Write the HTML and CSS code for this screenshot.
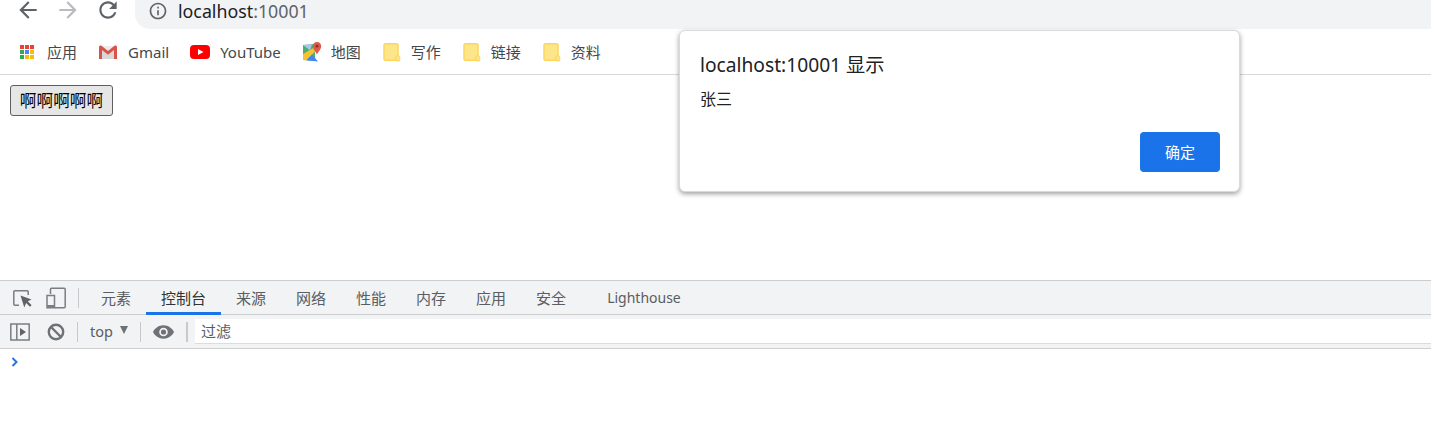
FILE: index.html
```html
<!DOCTYPE html>
<html lang="zh-CN">
<head>
<meta charset="utf-8">
<title>localhost:10001</title>
<link rel="stylesheet" href="styles.css">
</head>
<body>
<div class="window">
  <header class="toolbar">
    <svg class="nav-icon" viewBox="0 0 24 24"><path fill="#5f6368" d="M20 11H7.830l5.590-5.590L12 4l-8 8 8 8 1.410-1.410L7.830 13H20v-2z"/></svg>
    <svg class="nav-icon" viewBox="0 0 24 24"><path fill="#b9bbbe" d="M4 11h12.170l-5.590-5.590L12 4l8 8-8 8-1.410-1.410L16.170 13H4v-2z"/></svg>
    <svg class="nav-icon" viewBox="0 0 24 24"><path fill="#5f6368" d="M17.650 6.350C16.200 4.900 14.210 4 12 4c-4.420 0-7.990 3.580-7.990 8s3.570 8 7.990 8c3.730 0 6.840-2.550 7.730-6h-2.080c-.82 2.330-3.040 4-5.650 4-3.310 0-6-2.690-6-6s2.690-6 6-6c1.660 0 3.140.69 4.220 1.780L13 11h7V4l-2.350 2.350z"/></svg>
    <div class="address">
      <svg class="info-icon" viewBox="0 0 24 24"><path fill="#5f6368" d="M11 7h2v2h-2zm0 4h2v6h-2zm1-9C6.480 2 2 6.480 2 12s4.480 10 10 10 10-4.480 10-10S17.520 2 12 2zm0 18c-4.410 0-8-3.590-8-8s3.590-8 8-8 8 3.590 8 8-3.590 8-8 8z"/></svg>
      <span class="url">localhost<span class="url-port">:10001</span></span>
    </div>
  </header>

  <nav class="bookmarks">
    <a class="bookmark">
      <svg class="bm-icon" viewBox="0 0 20 20">
        <rect x="3" y="3" width="4" height="4" fill="#ea4335"/><rect x="8" y="3" width="4" height="4" fill="#ea4335"/><rect x="13" y="3" width="4" height="4" fill="#ea4335"/>
        <rect x="3" y="8" width="4" height="4" fill="#34a853"/><rect x="8" y="8" width="4" height="4" fill="#4285f4"/><rect x="13" y="8" width="4" height="4" fill="#fbbc05"/>
        <rect x="3" y="13" width="4" height="4" fill="#34a853"/><rect x="8" y="13" width="4" height="4" fill="#fbbc05"/><rect x="13" y="13" width="4" height="4" fill="#fbbc05"/>
      </svg>
      应用
    </a>
    <a class="bookmark">
      <svg class="bm-icon" viewBox="0 0 20 20">
        <path fill="#ececec" d="M1 4h18v13H1z"/>
        <path fill="#d8d8d8" d="M4 17V8l6 4.500L16 8v9z"/>
        <path fill="#d9534a" d="M1 5.200C1 3.600 2.700 3.100 3.800 4L10 9l6.200-5c1.100-.9 2.800-.4 2.800 1.200V17h-3V8l-6 4.700L4 8v9H1z"/>
      </svg>
      Gmail
    </a>
    <a class="bookmark">
      <svg class="bm-icon" viewBox="0 0 20 20">
        <rect y="3" width="20" height="14" rx="4" fill="#f00"/>
        <path fill="#fff" d="M8 7l5.500 3L8 13z"/>
      </svg>
      YouTube
    </a>
    <a class="bookmark bookmark-maps">
      <svg class="bm-icon" viewBox="0 0 20 20">
        <path fill="#4caf70" d="M1 3l12-1v17L1 18z"/>
        <path fill="#fbc02d" d="M1 12l12-7v4.500L4.500 18.300 1 18z"/>
        <path fill="#4285f4" d="M4.500 18.300L10 12.500l6 7z"/>
        <path fill="#a8c7f0" d="M8 8.200L1 3l9-.8z"/>
        <path fill="#dd5a4c" d="M15 0c-2.500 0-4.200 2-4.200 4.200 0 3 4.200 7 4.200 8.800 0-1.800 4.200-5.800 4.200-8.800C19.200 2 17.500 0 15 0z"/>
        <circle cx="15" cy="4.200" r="1.400" fill="#8e2f25"/>
      </svg>
      地图
    </a>
    <a class="bookmark bookmark-folder">
      <svg class="folder-icon" viewBox="0 0 18 20">
        <path fill="#fde68a" stroke="#fbd75b" stroke-width="1.500" d="M2.500 1.800h11a1.500 1.500 0 0 1 1.500 1.500v12.500h-2v2.400H2.500a1.500 1.500 0 0 1-1.500-1.500V3.300a1.500 1.500 0 0 1 1.500-1.500z"/>
        <rect x="12.800" y="14" width="4" height="5" rx="1" fill="#fde68a" stroke="#fbd75b"/>
      </svg>
      写作
    </a>
    <a class="bookmark bookmark-folder">
      <svg class="folder-icon" viewBox="0 0 18 20">
        <path fill="#fde68a" stroke="#fbd75b" stroke-width="1.500" d="M2.500 1.800h11a1.500 1.500 0 0 1 1.500 1.500v12.500h-2v2.400H2.500a1.500 1.500 0 0 1-1.500-1.500V3.300a1.500 1.500 0 0 1 1.500-1.500z"/>
        <rect x="12.800" y="14" width="4" height="5" rx="1" fill="#fde68a" stroke="#fbd75b"/>
      </svg>
      链接
    </a>
    <a class="bookmark bookmark-folder">
      <svg class="folder-icon" viewBox="0 0 18 20">
        <path fill="#fde68a" stroke="#fbd75b" stroke-width="1.500" d="M2.500 1.800h11a1.500 1.500 0 0 1 1.500 1.500v12.500h-2v2.400H2.500a1.500 1.500 0 0 1-1.500-1.500V3.300a1.500 1.500 0 0 1 1.500-1.500z"/>
        <rect x="12.800" y="14" width="4" height="5" rx="1" fill="#fde68a" stroke="#fbd75b"/>
      </svg>
      资料
    </a>
  </nav>

  <main class="page">
    <button class="page-button">啊啊啊啊啊</button>
  </main>

  <section class="devtools">
    <div class="dt-tabs">
      <div class="dt-tools">
        <svg class="dt-icon" viewBox="0 0 20 20"><path fill="none" stroke="#7a7e82" stroke-width="1.500" d="M7 17.200H2.800a1 1 0 0 1-1-1V3.800a1 1 0 0 1 1-1h12.400a1 1 0 0 1 1 1V7"/><path fill="#5f6368" d="M8.500 7.500L19.500 11.500 15.800 13.300 19.600 17.200 18 18.800 14.100 15 12.300 19.500z"/></svg>
        <svg class="dt-icon dt-icon-device" viewBox="0 0 20 22"><path fill="none" stroke="#7a7e82" stroke-width="1.500" d="M4.500 7V2.300a1 1 0 0 1 1-1h12.700a1 1 0 0 1 1 1v17.400a1 1 0 0 1-1 1H9"/><path fill="#f1f3f4" stroke="#7a7e82" stroke-width="1.500" d="M1 8.500h7.500v12.200H1z"/><path fill="#7a7e82" d="M1 18h7.500v2.700H1z"/></svg>
      </div>
      <span class="dt-sep"></span>
      <div class="tab-list">
        <span class="tab">元素</span>
        <span class="tab tab-active">控制台</span>
        <span class="tab">来源</span>
        <span class="tab">网络</span>
        <span class="tab">性能</span>
        <span class="tab">内存</span>
        <span class="tab">应用</span>
        <span class="tab">安全</span>
        <span class="tab tab-lighthouse">Lighthouse</span>
      </div>
    </div>
    <div class="dt-filter">
      <svg class="dock-icon" viewBox="0 0 20 18"><path fill="none" stroke="#7a7e82" stroke-width="1.500" d="M.8 1h18.400v16H.8zM6.800 1v16"/><path fill="#5f6368" d="M10 5l6 4-6 4z"/></svg>
      <svg class="block-icon" viewBox="0 0 18 18"><circle cx="9" cy="9" r="7.200" fill="none" stroke="#6e7276" stroke-width="2.400"/><path stroke="#6e7276" stroke-width="2.400" d="M4 4l10 10"/></svg>
      <span class="dt-sep"></span>
      <span class="context">top<i class="caret"></i></span>
      <span class="dt-sep"></span>
      <svg class="eye-icon" viewBox="0 0 22 14"><path fill="#6e7276" fill-rule="evenodd" d="M11 0C6 0 2 3 0 7c2 4 6 7 11 7s9-3 11-7c-2-4-6-7-11-7zm0 11.500a4.500 4.500 0 1 1 0-9 4.500 4.500 0 0 1 0 9z"/><circle cx="11" cy="7" r="2.700" fill="#6e7276"/></svg>
      <span class="dt-sep dt-sep-thick"></span>
      <div class="filter-input">过滤</div>
    </div>
    <div class="console">
      <svg class="prompt" viewBox="0 0 8 10"><path fill="none" stroke="#2a72e5" stroke-width="2" d="M1.500 1l4 4-4 4"/></svg>
    </div>
  </section>

  <div class="dialog" role="alertdialog">
    <h1 class="dialog-title">localhost:10001 显示</h1>
    <p class="dialog-message">张三</p>
    <div class="dialog-actions">
      <button class="dialog-ok">确定</button>
    </div>
  </div>
</div>
</body>
</html>
```

FILE: styles.css
```css
* { box-sizing: border-box; }

html, body {
  margin: 0;
  height: 100%;
  overflow: hidden;
  background: #fff;
}

body {
  font-family: "Noto Sans", "Noto Sans CJK SC", sans-serif;
}

.window {
  position: relative;
  display: flex;
  flex-direction: column;
  width: 1431px;
  height: 426px;
  overflow: hidden;
}

/* Browser toolbar */
.toolbar {
  display: flex;
  align-items: center;
  gap: 14px;
  height: 29px;
  padding: 0 0 9px 15px;
  flex: none;
}

.nav-icon {
  width: 26px;
  height: 26px;
  flex: none;
}

.address {
  flex: 1;
  align-self: stretch;
  display: flex;
  align-items: center;
  gap: 10px;
  margin-bottom: -9px;
  padding: 0 0 7px 13px;
  background: #f1f3f4;
  border-bottom-left-radius: 15px;
}

.info-icon {
  width: 20px;
  height: 20px;
  flex: none;
}

.url {
  font-size: 17.800px;
  line-height: 22px;
  color: #202124;
}

.url-port { color: #5f6368; }

/* Bookmarks */
.bookmarks {
  display: flex;
  align-items: center;
  gap: 21px;
  height: 46px;
  padding: 0 0 0 17px;
  border-bottom: 1px solid #d9d9d9;
  flex: none;
}

.bookmark {
  display: flex;
  align-items: center;
  gap: 10px;
  font-size: 15px;
  line-height: 20px;
  color: #44474b;
}

.bm-icon {
  width: 20px;
  height: 20px;
  flex: none;
}

.bookmark-maps { gap: 9px; }
.bookmark-folder { margin-left: 1px; }

.folder-icon {
  width: 18px;
  height: 20px;
  flex: none;
}

/* Page */
.page {
  flex: 1;
  padding: 10px;
}

.page-button {
  display: block;
  width: 103px;
  height: 31px;
  padding: 0;
  font-family: "Noto Sans CJK SC", sans-serif;
  font-size: 16.670px;
  line-height: 1;
  color: #000;
  background: #e6e6e6;
  border: 1px solid #5f5f5f;
  border-radius: 3px;
}

/* DevTools */
.devtools {
  flex: none;
  height: 146px;
  display: flex;
  flex-direction: column;
  border-top: 1px solid #cdcdcd;
}

.dt-tabs {
  display: flex;
  align-items: center;
  height: 34px;
  padding-left: 12px;
  background: #f1f3f4;
  border-bottom: 1px solid #cdcdcd;
  flex: none;
}

.dt-tools {
  display: flex;
  align-items: center;
  gap: 14px;
}

.dt-icon {
  width: 20px;
  height: 20px;
  flex: none;
}

.dt-icon-device {
  width: 20px;
  height: 22px;
}

.dt-sep {
  width: 1px;
  height: 20px;
  margin-left: 12px;
  background: #c8c9cb;
  flex: none;
}

.tab-list {
  display: flex;
  align-self: stretch;
  margin-left: 7px;
}

.tab {
  display: flex;
  align-items: center;
  padding: 1px 15px 0;
  font-size: 15px;
  color: #5a5d61;
  margin-bottom: -1px;
  border-bottom: 3px solid transparent;
}

.tab-active {
  color: #303336;
  border-bottom-color: #1a73e8;
}

.tab-lighthouse {
  margin-left: 11px;
  font-size: 14px;
}

.dt-filter {
  display: flex;
  align-items: center;
  height: 34px;
  padding-left: 10px;
  background: #f1f3f4;
  border-bottom: 1px solid #cdcdcd;
  flex: none;
}

.dock-icon {
  width: 20px;
  height: 18px;
  flex: none;
}

.block-icon {
  width: 18px;
  height: 18px;
  margin-left: 17px;
  flex: none;
}

.context {
  display: flex;
  align-items: center;
  gap: 7px;
  margin-left: 12px;
  font-size: 14.500px;
  line-height: 20px;
  margin-bottom: 2px;
  color: #5a5d61;
}

.caret {
  width: 0;
  height: 0;
  border-left: 4.500px solid transparent;
  border-right: 4.500px solid transparent;
  border-top: 8px solid #6e7276;
  margin-top: -1px;
}

.eye-icon {
  width: 21px;
  height: 14px;
  margin-left: 12px;
  flex: none;
}

.dt-sep-thick { width: 2px; }

.filter-input {
  flex: 1;
  height: 25px;
  margin-left: 7px;
  margin-bottom: 1px;
  padding-left: 6px;
  font-size: 15px;
  line-height: 25px;
  color: #5a5d61;
  background: #fff;
  border-bottom: 1px solid #dcdcdc;
}

.console {
  flex: 1;
  padding: 8px 0 0 11px;
  background: #fff;
}

.prompt {
  display: block;
  width: 8px;
  height: 10px;
}

/* Alert dialog, laid over the page */
.dialog {
  position: absolute;
  left: 679px;
  top: 30px;
  width: 561px;
  height: 162px;
  padding: 22px 19px 19px 20px;
  background: #fff;
  border: 1px solid #dadada;
  border-radius: 6px;
  box-shadow: 0 2px 5px rgba(0, 0, 0, 0.38);
  display: flex;
  flex-direction: column;
}

.dialog-title {
  margin: 0;
  font-size: 19.200px;
  font-weight: 400;
  line-height: 24px;
  color: #202124;
}

.dialog-message {
  margin: 11px 0 0;
  font-size: 16px;
  line-height: 22px;
  color: #202124;
}

.dialog-actions {
  margin-top: auto;
  display: flex;
  justify-content: flex-end;
}

.dialog-ok {
  width: 80px;
  height: 40px;
  padding: 0 0 2px;
  font-family: "Noto Sans CJK SC", sans-serif;
  font-size: 15px;
  color: #fff;
  background: #1a73e8;
  border: 0;
  border-radius: 4px;
}
```
